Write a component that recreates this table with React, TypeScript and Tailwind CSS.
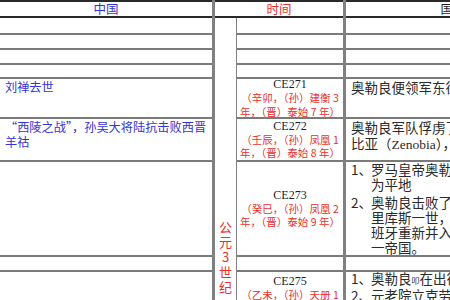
import type { ReactNode } from 'react';

const ROW_H = [
  'h-[17px]',
  'h-[15px]',
  'h-[15px]',
  'h-[14px]',
  'h-[40px]',
  'h-[43px]',
  'h-[95px]',
  'h-[15px]',
  'h-[58px]',
];

const CJK = "font-['Noto_Sans_CJK_SC',sans-serif]";
const SERIF = "font-['Liberation_Serif','Noto_Sans_CJK_SC',serif]";

function Header({ children, className }: { children: ReactNode; className: string }) {
  return (
    <div
      className={`flex h-[18px] shrink-0 items-center justify-center border-y-2 border-[#2a2a2a] text-[12.5px] leading-[14px] ${className}`}
    >
      {children}
    </div>
  );
}

function Rows({ cells }: { cells: Record<number, ReactNode> }) {
  return (
    <>
      {ROW_H.map((h, i) => (
        <div key={i} className={`${h} shrink-0 border-b-2 border-[#7a7a7a]`}>
          {cells[i]}
        </div>
      ))}
    </>
  );
}

function TimeCell({ ce, l1, l2, top }: { ce: string; l1: string; l2: string; top?: boolean }) {
  return (
    <div
      className={`flex h-full flex-col items-center whitespace-pre ${top ? 'justify-start pt-[3px]' : 'justify-center'}`}
    >
      <div className={`${SERIF} text-[12px] leading-[13px] text-[#1e1e1e]`}>{ce}</div>
      <div className="text-[10.5px] leading-[13.5px] text-[#e8302c]">{l1}</div>
      <div className="text-[10.5px] leading-[13.5px] text-[#e8302c]">{l2}</div>
    </div>
  );
}

function Item({ n, lines }: { n: string; lines: ReactNode[] }) {
  return (
    <div className="mb-[3px] flex">
      <div className="w-[20px] shrink-0">{n}</div>
      <div>
        {lines.map((l, i) => (
          <div key={i}>{l}</div>
        ))}
      </div>
    </div>
  );
}

export default function App() {
  return (
    <div className={`h-[300px] w-[450px] overflow-hidden bg-white ${CJK}`}>
      <div className="flex w-max">
        {/* 中国 */}
        <div className="flex w-[215px] shrink-0 flex-col border-r-[3px] border-[#808080]">
          <Header className="text-[#3434d2]">中国</Header>
          <Rows
            cells={{
              4: (
                <div className="whitespace-nowrap pl-[5px] pt-[1px] text-[12.2px] leading-[15px] text-[#3434d2]">
                  刘禅去世
                </div>
              ),
              5: (
                <div className="whitespace-nowrap pl-[5px] pt-[1px] text-[12.2px] leading-[15px] text-[#3434d2]">
                  “西陵之战”，孙吴大将陆抗击败西晋
                  <br />
                  羊祜
                </div>
              ),
            }}
          />
        </div>

        {/* 时间 */}
        <div className="flex w-[131px] shrink-0 flex-col border-r-[3px] border-[#808080]">
          <Header className="text-[#e8302c]">时间</Header>
          <div className="flex">
            <div className="flex w-[22px] shrink-0 flex-col items-center border-r border-[#808080] pt-[201px] text-[13px] leading-[15px] text-[#e8302c]">
              <span>公</span>
              <span>元</span>
              <span>3</span>
              <span>世</span>
              <span>纪</span>
            </div>
            <div className="flex w-[106px] shrink-0 flex-col">
              <Rows
                cells={{
                  4: <TimeCell ce="CE271" l1="（辛卯，（孙）建衡 3" l2="年，（晋）泰始 7 年）" />,
                  5: <TimeCell ce="CE272" l1="（壬辰，（孙）凤凰 1" l2="年，（晋）泰始 8 年）" />,
                  6: <TimeCell ce="CE273" l1="（癸巳，（孙）凤凰 2" l2="年，（晋）泰始 9 年）" />,
                  8: <TimeCell top ce="CE275" l1="（乙未，（孙）天册 1" l2="年，（晋）咸宁 1 年）" />,
                }}
              />
            </div>
          </div>
        </div>

        {/* 国外 */}
        <div className="flex w-[214px] shrink-0 flex-col">
          <Header className="text-[#1e1e1e]">国外</Header>
          <Rows
            cells={{
              4: (
                <div className="whitespace-nowrap pl-[5px] pt-[1px] text-[13.5px] leading-[15px] text-[#2a2a2a]">
                  奥勒良便领军东征帕尔米拉
                </div>
              ),
              5: (
                <div className="whitespace-nowrap pl-[5px] pt-[1px] text-[13.5px] leading-[15.5px] text-[#2a2a2a]">
                  奥勒良军队俘虏了帕尔米拉女王芝诺
                  <br />
                  比亚（<span className={SERIF}>Zenobia</span>），巴尔米拉
                </div>
              ),
              6: (
                <div className="whitespace-nowrap pl-[5px] text-[13.5px] leading-[15px] text-[#2a2a2a]">
                  <Item n="1、" lines={['罗马皇帝奥勒良将帕尔米拉夷', '为平地']} />
                  <Item
                    n="2、"
                    lines={['奥勒良击败了高卢帝国皇帝泰特', '里库斯一世，将高卢、不列颠和西', '班牙重新并入帝国，重新统', '一帝国。']}
                  />
                </div>
              ),
              8: (
                <div className="-mt-[1px] whitespace-nowrap pl-[5px] text-[13.5px] leading-[15px] text-[#2a2a2a]">
                  <div className="flex">
                    <div className="w-[20px] shrink-0">1、</div>
                    <div>
                      奥勒良<span className="text-[8px]">叩</span>在出征波斯途中被杀
                    </div>
                  </div>
                  <div className="flex">
                    <div className="w-[20px] shrink-0">2、</div>
                    <div>元老院立克劳狄乌斯·塔西佗为帝</div>
                  </div>
                </div>
              ),
            }}
          />
        </div>
      </div>
    </div>
  );
}
